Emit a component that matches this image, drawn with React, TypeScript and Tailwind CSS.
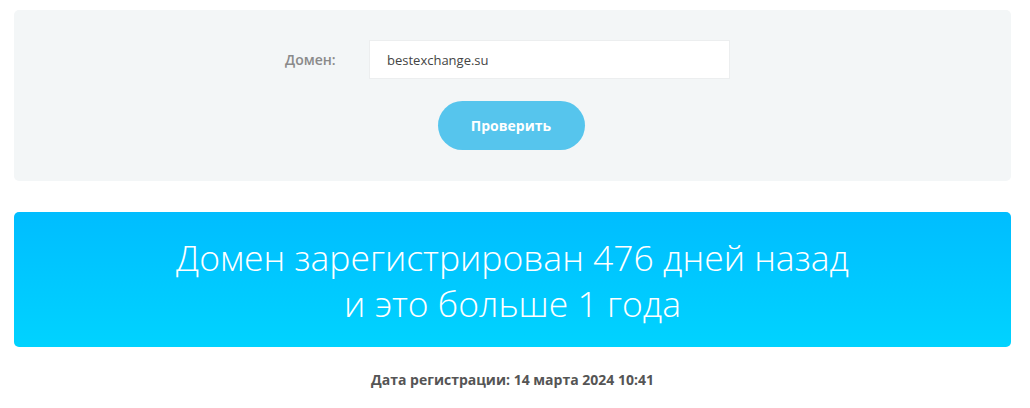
export default function App() {
  return (
    <div className="min-h-screen bg-white pl-[14px] pr-[19px] pt-[10px] font-['Open_Sans','Noto_Sans',sans-serif]">
      <section className="rounded-[5px] bg-[#f3f6f7] pt-[30px] pb-[31px] flex flex-col items-center">
        <div className="mr-[10px] flex items-center">
          <label className="w-[84px] pr-[34px] text-right text-[14px] font-semibold text-[#8a8a8a]">
            Домен:
          </label>
          <input
            defaultValue="bestexchange.su"
            className="h-[39px] w-[361px] border border-[#eceeef] bg-white px-[17px] text-[13px] text-[#444] outline-none"
          />
        </div>
        <button className="mt-[22px] mr-[3px] h-[49px] w-[147px] rounded-full bg-[#56c5ed] text-[14px] font-bold text-white">
          Проверить
        </button>
      </section>

      <section className="mt-[31px] h-[135px] rounded-[5px] bg-gradient-to-b from-[#00bdff] to-[#00d3ff] flex flex-col items-center justify-center text-center text-[35.5px] font-light leading-[46px] text-white">
        <p>Домен зарегистрирован 476 дней назад</p>
        <p>и это больше 1 года</p>
      </section>

      <p className="mt-[22px] text-center text-[14px] font-bold text-[#555]">
        Дата регистрации: 14 марта 2024 10:41
      </p>
    </div>
  );
}
